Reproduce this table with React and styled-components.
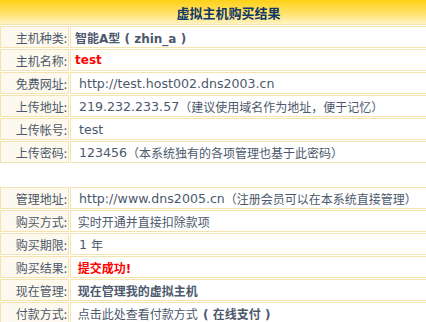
import React from "react";
import styled, { createGlobalStyle } from "styled-components";

const Global = createGlobalStyle`
  html, body { margin: 0; padding: 0; overflow: hidden; background: #fff; }
  body {
    font-family: "DejaVu Sans", "Noto Sans CJK SC", sans-serif;
    font-size: 12px;
    color: #4c586b;
  }
`;

const Page = styled.div`
  width: 457px;
  display: flex;
  flex-direction: column;
  gap: 1px;
`;

const Header = styled.div`
  height: 24px;
  border-bottom: 1px solid #f4e3ae;
  background: linear-gradient(to bottom, #ffd015 0%, #ffe26a 55%, #fff3c4 100%);
  display: flex;
  align-items: center;
  justify-content: center;
  font-family: "Noto Sans CJK SC", sans-serif;
  font-weight: bold;
  font-size: 13px;
  color: #0f3768;
`;

const Grid = styled.div`
  display: grid;
  grid-template-columns: 69px 1fr;
  column-gap: 1px;
  row-gap: 1px;
`;

const Cell = styled.div`
  height: 22px;
  box-sizing: border-box;
  border: 1px solid #f4e3ae;
  display: flex;
  align-items: center;
  white-space: pre;
  overflow: hidden;
`;

const Label = styled(Cell)`
  justify-content: flex-end;
  padding-right: 1px;
  background: #fdf9ee;
  font-family: "Noto Sans CJK SC", sans-serif;
`;

const Value = styled(Cell)`
  padding-left: 4px;
  background: #fff;
`;

const Spacer = styled.div`
  grid-column: 1 / -1;
  height: 22px;
`;

const Latin = styled.span`
  font-family: "DejaVu Sans", sans-serif;
  font-size: 12.6px;
`;

const Cjk = styled.span`
  font-family: "Noto Sans CJK SC", sans-serif;
`;

const Strong = styled.span`
  font-weight: bold;
  color: ${(p) => (p.$red ? "#ff0000" : "inherit")};
`;

const Row = ({ label, children }) => (
  <>
    <Label>{label}</Label>
    <Value>{children}</Value>
  </>
);

export default function App() {
  return (
    <>
      <Global />
      <Page>
        <Header>虚拟主机购买结果</Header>
        <Grid>
          <Row label="主机种类:">
            <Strong>
              <Cjk>智能</Cjk>A<Cjk>型</Cjk> ( zhin_a )
            </Strong>
          </Row>
          <Row label="主机名称:">
            <Strong $red>test</Strong>
          </Row>
          <Row label="免费网址:">
            <Latin> http://test.host002.dns2003.cn</Latin>
          </Row>
          <Row label="上传地址:">
            <Latin> 219.232.233.57</Latin>
            <Cjk>（建议使用域名作为地址，便于记忆）</Cjk>
          </Row>
          <Row label="上传帐号:">
            <Latin> test</Latin>
          </Row>
          <Row label="上传密码:">
            <Latin> 123456</Latin>
            <Cjk>（本系统独有的各项管理也基于此密码）</Cjk>
          </Row>
          <Spacer />
          <Row label="管理地址:">
            <Latin> http://www.dns2005.cn</Latin>
            <Cjk>（注册会员可以在本系统直接管理）</Cjk>
          </Row>
          <Row label="购买方式:">
            <Cjk> 实时开通并直接扣除款项</Cjk>
          </Row>
          <Row label="购买期限:">
            <Latin> 1 </Latin>
            <Cjk>年</Cjk>
          </Row>
          <Row label="购买结果:">
            <Strong $red>
              <Cjk> 提交成功</Cjk>!
            </Strong>
          </Row>
          <Row label="现在管理:">
            <Strong>
              <Cjk> 现在管理我的虚拟主机</Cjk>
            </Strong>
          </Row>
          <Row label="付款方式:">
            <Cjk> 点击此处查看付款方式  </Cjk>
            <Strong>
              ( <Cjk>在线支付</Cjk> )
            </Strong>
          </Row>
        </Grid>
      </Page>
    </>
  );
}
